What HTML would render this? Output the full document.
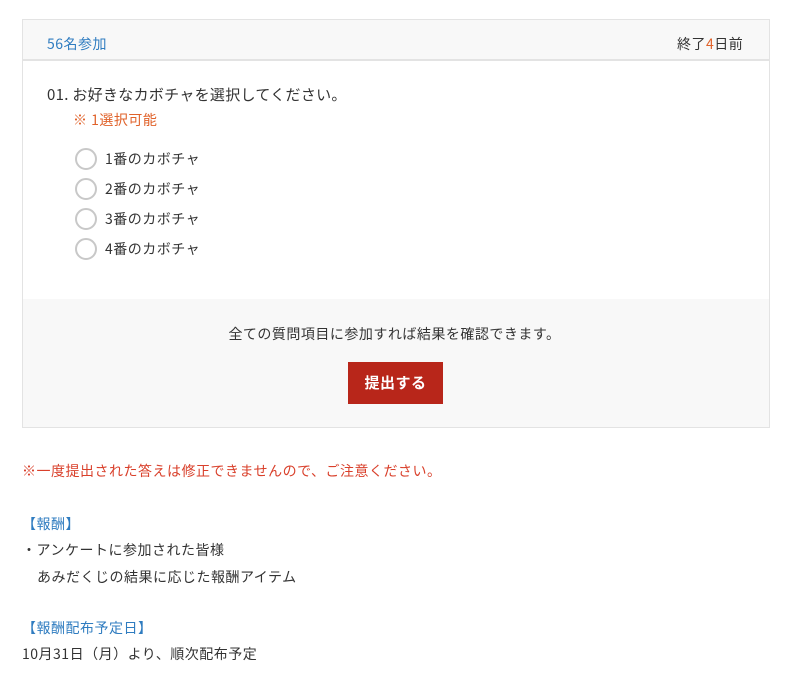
<!DOCTYPE html>
<html><head><meta charset="utf-8"><style>
body{margin:0;background:#fff;font-family:"Noto Sans CJK JP",sans-serif;color:#333;font-size:14px;letter-spacing:0.5px;width:789px;height:684px;position:relative;overflow:hidden}
.a{position:absolute;white-space:nowrap;line-height:20px}
.card{position:absolute;left:22px;top:19px;width:746px;height:407px;border:1px solid #e3e3e3;background:#fff}
.hd{position:absolute;left:0;top:0;width:746px;height:39px;background:#f8f8f8;border-bottom:2px solid #e3e3e3}
.ft{position:absolute;left:0;top:279px;width:746px;height:128px;background:#f8f8f8}
.r{position:absolute;left:75px;width:22px;height:22px;border:2px solid #c8c8c8;border-radius:50%;box-sizing:border-box;background:#fff}
.btn{position:absolute;left:348px;top:362px;width:95px;height:42px;background:#b8261a;color:#fff;font-weight:bold;font-size:15px;line-height:42px;text-align:center}
</style></head><body>
<div class="card"><div class="hd"></div><div class="ft"></div></div>
<div class="a" style="left:47px;top:34px;color:#2f7cc0">56名参加</div>
<div class="a" style="left:677px;top:34px">終了<span style="color:#e0622a">4</span>日前</div>
<div class="a" style="left:47px;top:85px;font-size:15px;letter-spacing:0.3px">01. お好きなカボチャを選択してください。</div>
<div class="a" style="left:73px;top:110px;color:#e0622a">※ 1選択可能</div>
<div class="r" style="top:148px"></div><div class="a" style="left:105px;top:149px">1番のカボチャ</div>
<div class="r" style="top:178px"></div><div class="a" style="left:105px;top:179px">2番のカボチャ</div>
<div class="r" style="top:208px"></div><div class="a" style="left:105px;top:209px">3番のカボチャ</div>
<div class="r" style="top:238px"></div><div class="a" style="left:105px;top:239px">4番のカボチャ</div>
<div class="a" style="left:0;width:789px;text-align:center;top:324px">全ての質問項目に参加すれば結果を確認できます。</div>
<div class="btn">提出する</div>
<div class="a" style="left:22px;top:461px;color:#d9402b">※一度提出された答えは修正できませんので、ご注意ください。</div>
<div class="a" style="left:22px;top:514px;color:#2f7cc0">【報酬】</div>
<div class="a" style="left:22px;top:540px">・アンケートに参加された皆様</div>
<div class="a" style="left:37px;top:567px">あみだくじの結果に応じた報酬アイテム</div>
<div class="a" style="left:22px;top:618px;color:#2f7cc0">【報酬配布予定日】</div>
<div class="a" style="left:22px;top:644px">10月31日（月）より、順次配布予定</div>
</body></html>
